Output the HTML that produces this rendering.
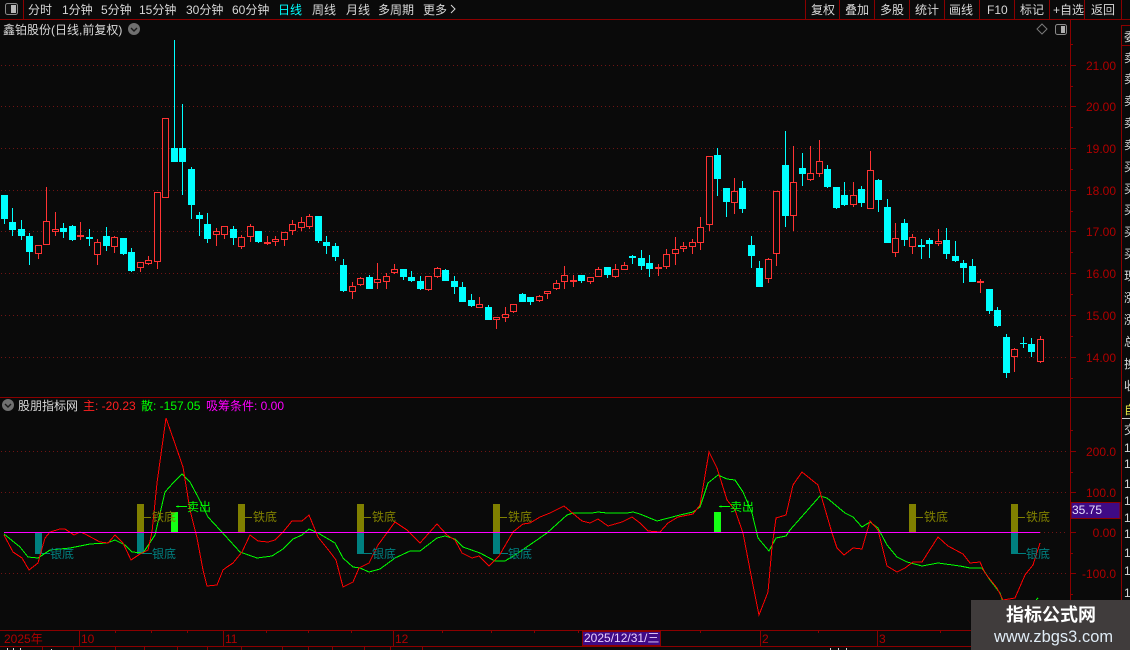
<!DOCTYPE html>
<html><head><meta charset="utf-8"><title>鑫铂股份</title>
<style>
html,body{margin:0;padding:0;background:#0a0a0a;width:1130px;height:650px;overflow:hidden}
svg{display:block;font-family:"Liberation Sans","WenQuanYi Zen Hei","Noto Sans CJK SC",sans-serif;font-size:12px}
text{text-rendering:optimizeSpeed}
.t{fill:#d8d8d8}
.a{fill:#b00000}
.o{fill:#808000}
.s{fill:#008080}
.g{fill:#00ff00}
</style></head><body>
<svg width="1130" height="650" viewBox="0 0 1130 650" xmlns="http://www.w3.org/2000/svg">
<rect width="1130" height="650" fill="#0a0a0a"/>

<!-- grid -->
<g stroke="#701414" stroke-width="1" stroke-dasharray="1 3" fill="none" shape-rendering="crispEdges">
<path d="M1 65.5H1068M1 106.5H1068M1 148.5H1068M1 190.5H1068M1 231.5H1068M1 273.5H1068M1 315.5H1068M1 357.5H1068"/>
<path d="M1 451.5H1068M1 492.5H1068M1040 532.5H1068M1 573.5H1068"/>
</g>

<!-- frame lines -->
<g stroke="#8b0000" stroke-width="1" fill="none" shape-rendering="crispEdges">
<path d="M0 19.5H1130M23.5 0V19M805.5 0V19M839.5 0V19M874.5 0V19M909.5 0V19M944.5 0V19M979.5 0V19M1014.5 0V19M1049.5 0V19M1084.5 0V19M1121.5 0V19"/>
<path d="M1070.5 19V646M1121.5 25V646M1122 25.5H1130M1122 45.5H1130M0 397.5H1121M0 630.5H1121M0 646.5H1121"/>
<path d="M1071 65.5h5M1071 86.5h2M1071 106.5h5M1071 127.5h2M1071 148.5h5M1071 169.5h2M1071 190.5h5M1071 211.5h2M1071 231.5h5M1071 252.5h2M1071 273.5h5M1071 294.5h2M1071 315.5h5M1071 336.5h2M1071 357.5h5M1071 378.5h2M1071 44.5h2"/>
<path d="M1071 451.5h5M1071 472.5h2M1071 492.5h5M1071 532.5h5M1071 553.5h2M1071 573.5h5M1071 430.5h2M1071 594.5h2"/>
<path d="M79.5 631V646M223.5 631V646M393.5 631V646M760.5 631V646M877.5 631V646M115.5 631v2M151.5 631v2M187.5 631v2M266.5 631v2M308.5 631v2M351.5 631v2M442.5 631v2M491.5 631v2M534.5 631v2M578.5 631v2M700.5 631v2M818.5 631v2M940.5 631v2"/>
<path d="M42.5 647V650M73.5 647V650M115.5 647V650M144.5 647V650M177.5 647V650M207.5 647V650M241.5 647V650M282.5 647V650M308.5 647V650M332.5 647V650M364.5 647V650M390.5 647V650M422.5 647V650"/>
</g>

<!-- candles -->
<path shape-rendering="crispEdges" stroke="#00ffff" stroke-width="1" fill="none" d="M4.5 195V224M12.5 208V236M21.5 220V240M29.5 233V265M63.5 223V238M72.5 225V241M89.5 229V246M106.5 227V251M123.5 238V255M131.5 248V272M174.5 40V162M182.5 104V195M191.5 167V219M199.5 212V236M207.5 213V243M233.5 226V245M258.5 231V243M318.5 216V243M326.5 236V254M335.5 243V261M343.5 259V292M369.5 275V289M403.5 269V280M411.5 271V282M420.5 276V290M445.5 269V281M454.5 276V294M462.5 282V302M471.5 294V307M488.5 305V320M522.5 293V302M530.5 297V305M581.5 275V283M607.5 267V278M632.5 255V264M641.5 250V270M649.5 255V277M717.5 148V196M726.5 188V217M742.5 181V213M751.5 236V268M759.5 261V287M785.5 131V227M802.5 153V186M827.5 165V188M836.5 187V209M844.5 182V206M861.5 186V207M878.5 179V212M887.5 199V243M904.5 219V246M921.5 239V259M929.5 238V258M946.5 228V259M955.5 241V262M963.5 260V283M972.5 259V282M989.5 289V314M997.5 307V327M1006.5 334V378M1023.5 337V348M1031.5 338V357"/>
<path shape-rendering="crispEdges" fill="#00ffff" d="M1 195h7v24h-7zM9 222h7v8h-7zM18 229h7v7h-7zM26 236h7v16h-7zM60 228h7v4h-7zM69 226h7v14h-7zM86 237h7v2h-7zM103 236h7v10h-7zM120 238h7v16h-7zM128 252h7v19h-7zM171 148h7v14h-7zM179 148h7v14h-7zM188 169h7v36h-7zM196 215h7v4h-7zM204 224h7v15h-7zM230 229h7v9h-7zM255 231h7v11h-7zM315 216h7v25h-7zM323 242h7v4h-7zM332 246h7v11h-7zM340 265h7v26h-7zM366 277h7v12h-7zM400 269h7v8h-7zM408 277h7v4h-7zM417 281h7v8h-7zM442 270h7v11h-7zM451 281h7v6h-7zM459 287h7v15h-7zM468 300h7v6h-7zM485 307h7v13h-7zM519 294h7v8h-7zM527 297h7v5h-7zM578 275h7v6h-7zM604 267h7v8h-7zM629 256h7v2h-7zM638 258h7v8h-7zM646 263h7v6h-7zM714 155h7v24h-7zM723 188h7v14h-7zM739 188h7v21h-7zM748 245h7v11h-7zM756 268h7v19h-7zM782 165h7v51h-7zM799 168h7v6h-7zM824 169h7v18h-7zM833 187h7v21h-7zM841 195h7v10h-7zM858 189h7v14h-7zM875 180h7v20h-7zM884 207h7v36h-7zM901 223h7v17h-7zM918 245h7v2h-7zM926 240h7v4h-7zM943 240h7v14h-7zM952 256h7v5h-7zM960 263h7v5h-7zM969 266h7v16h-7zM986 289h7v22h-7zM994 310h7v16h-7zM1003 337h7v36h-7zM1020 343h7v1h-7zM1028 344h7v8h-7z"/>
<path shape-rendering="crispEdges" stroke="#ff3333" stroke-width="1" fill="none" d="M38.5 245V259M46.5 187V245M55.5 212V236M80.5 222V240M97.5 239V265M114.5 236V253M140.5 262V272M148.5 256V265M157.5 192V269M216.5 228V246M224.5 226V239M241.5 235V249M250.5 224V242M267.5 236V245M275.5 236V246M284.5 232V246M292.5 220V235M301.5 217V231M309.5 214V229M352.5 282V299M360.5 277V286M377.5 263V289M386.5 273V289M394.5 264V274M428.5 276V291M437.5 267V278M479.5 297V308M496.5 317V329M505.5 307V322M513.5 304V313M539.5 295V302M547.5 291V299M556.5 280V290M564.5 266V289M573.5 275V287M590.5 277V284M598.5 267V277M615.5 264V278M624.5 262V270M658.5 264V276M666.5 249V269M675.5 237V265M683.5 242V252M692.5 239V254M700.5 217V250M709.5 156V231M734.5 178V214M768.5 258V283M776.5 191V266M793.5 146V231M810.5 146V181M819.5 140V177M853.5 182V207M870.5 151V209M895.5 223V257M912.5 234V254M938.5 229V246M980.5 279V293M1014.5 348V372M1040.5 336V363"/>
<path shape-rendering="crispEdges" stroke="#ff3333" stroke-width="1" fill="#0a0a0a" d="M35.5 245.5h6v8h-6zM43.5 221.5h6v23h-6zM52.5 229.5h6v2h-6zM94.5 242.5h6v12h-6zM111.5 237.5h6v9h-6zM137.5 262.5h6v5h-6zM145.5 260.5h6v3h-6zM154.5 192.5h6v69h-6zM162.5 118.5h6v79h-6zM213.5 231.5h6v3h-6zM221.5 226.5h6v8h-6zM238.5 237.5h6v9h-6zM247.5 226.5h6v10h-6zM272.5 239.5h6v2h-6zM281.5 232.5h6v7h-6zM289.5 224.5h6v6h-6zM298.5 222.5h6v5h-6zM306.5 216.5h6v10h-6zM349.5 286.5h6v5h-6zM357.5 278.5h6v6h-6zM374.5 279.5h6v3h-6zM383.5 276.5h6v5h-6zM391.5 269.5h6v3h-6zM425.5 276.5h6v13h-6zM434.5 268.5h6v8h-6zM476.5 304.5h6v3h-6zM493.5 317.5h6v2h-6zM502.5 314.5h6v3h-6zM510.5 304.5h6v7h-6zM536.5 296.5h6v4h-6zM544.5 291.5h6v2h-6zM553.5 283.5h6v5h-6zM561.5 275.5h6v6h-6zM587.5 277.5h6v4h-6zM595.5 269.5h6v7h-6zM612.5 269.5h6v7h-6zM621.5 265.5h6v4h-6zM663.5 254.5h6v12h-6zM672.5 249.5h6v4h-6zM680.5 246.5h6v2h-6zM689.5 242.5h6v4h-6zM697.5 227.5h6v15h-6zM706.5 156.5h6v68h-6zM731.5 191.5h6v11h-6zM765.5 259.5h6v19h-6zM773.5 191.5h6v62h-6zM790.5 182.5h6v33h-6zM807.5 173.5h6v6h-6zM816.5 161.5h6v12h-6zM850.5 195.5h6v9h-6zM867.5 170.5h6v38h-6zM892.5 238.5h6v14h-6zM909.5 237.5h6v9h-6zM935.5 241.5h6v2h-6zM1011.5 349.5h6v7h-6zM1037.5 339.5h6v22h-6z"/>
<path shape-rendering="crispEdges" fill="#ff3333" d="M77 235h7v2h-7zM264 242h7v2h-7zM570 280h7v2h-7zM655 267h7v2h-7zM977 281h7v2h-7z"/>

<!-- indicator bars -->
<g shape-rendering="crispEdges">
<rect x="137" y="504" width="7" height="28" fill="#808000"/>
<rect x="238" y="504" width="7" height="28" fill="#808000"/>
<rect x="357" y="504" width="7" height="28" fill="#808000"/>
<rect x="493" y="504" width="7" height="28" fill="#808000"/>
<rect x="909" y="504" width="7" height="28" fill="#808000"/>
<rect x="1011" y="504" width="7" height="28" fill="#808000"/>
<rect x="35" y="533" width="7" height="21" fill="#008080"/>
<rect x="137" y="533" width="7" height="21" fill="#008080"/>
<rect x="357" y="533" width="7" height="21" fill="#008080"/>
<rect x="493" y="533" width="7" height="21" fill="#008080"/>
<rect x="1011" y="533" width="7" height="21" fill="#008080"/>
<rect x="171" y="512" width="7" height="20" fill="#14ff14"/>
<rect x="714" y="512" width="7" height="20" fill="#14ff14"/>
<path stroke="#808000" fill="none" d="M144 517.5h7M245 517.5h7M364 517.5h7M500 517.5h7M916 517.5h7M1018 517.5h7"/>
<path stroke="#008080" fill="none" d="M42 553.5h8M144 553.5h8M364 553.5h8M500 553.5h8M1018 553.5h8"/>
</g>

<!-- indicator lines -->
<polyline shape-rendering="crispEdges" fill="none" stroke="#00ff00" stroke-width="1" points="4,534 20,547 28,557 38,558 50,550 70,548 90,544 107,543 115,540 125,545 132,552 143,553 155,535 165,492 173,483 182,474 190,482 198,497 208,517 220,530 240,552 257,558 272,556 283,549 293,539 302,535 309,529 318,533 335,543 343,558 353,567 360,568 369,572 380,569 395,558 410,551 420,551 437,538 445,536 455,539 463,547 480,553 495,561 505,561 518,553 547,533 567,515 573,513 592,513 598,512 607,513 627,513 633,512 640,514 657,521 680,515 693,512 700,507 708,483 718,475 727,479 735,480 743,492 752,513 758,538 769,551 776,538 786,536 790,530 820,496 827,498 845,513 853,517 862,527 870,522 878,528 887,545 897,557 907,562 922,566 938,563 960,566 970,568 982,568 990,580 1000,593 1003,602"/>
<polyline shape-rendering="crispEdges" fill="none" stroke="#00ff00" stroke-width="1" points="1036,600 1038,598"/>
<polyline shape-rendering="crispEdges" fill="none" stroke="#ff0000" stroke-width="1" points="4,535 13,552 22,558 29,570 38,563 41,552 45,538 50,532 60,529 65,529 74,535 80,532 85,534 100,542 108,543 115,535 123,543 131,560 140,554 148,550 152,532 157,483 166,418 173,438 183,467 190,510 197,538 203,570 207,586 217,585 223,570 227,567 233,563 242,552 250,535 258,541 268,542 275,540 283,532 292,521 302,521 309,515 318,537 330,552 336,560 343,587 353,582 359,568 369,563 378,545 395,522 407,530 420,543 437,524 447,535 455,540 462,553 472,558 479,556 489,566 499,556 513,532 523,524 530,523 540,517 550,513 564,506 582,521 590,523 598,519 608,526 622,522 632,517 640,523 648,531 660,532 668,523 678,517 693,514 700,505 709,452 717,468 727,500 735,510 743,533 752,580 759,615 768,592 772,547 776,518 786,515 793,485 802,472 818,485 832,533 837,548 844,555 853,548 862,549 870,521 878,530 887,566 897,572 905,568 913,562 922,562 938,537 948,546 963,554 970,563 980,562 985,573 997,588 1003,600 1015,598 1025,575 1033,565 1040,543"/>
<path shape-rendering="crispEdges" stroke="#ff00ff" stroke-width="1" d="M4 532.5H1040"/>

<!-- indicator labels -->
<g>
<text x="152" y="521" class="o">铁底</text><text x="253" y="521" class="o">铁底</text><text x="372" y="521" class="o">铁底</text><text x="508" y="521" class="o">铁底</text><text x="924" y="521" class="o">铁底</text><text x="1026" y="521" class="o">铁底</text>
<text x="50" y="558" class="s">银底</text><text x="152" y="558" class="s">银底</text><text x="372" y="558" class="s">银底</text><text x="508" y="558" class="s">银底</text><text x="1026" y="558" class="s">银底</text>
<text x="187" y="511" class="g">卖出</text>
<text x="730" y="511" class="g">卖出</text>
</g>
<path stroke="#00ff00" fill="none" shape-rendering="crispEdges" d="M176 506.5h11M178 505.5v2M177 506v1M719 506.5h11M721 505.5v2M720 506v1"/>

<!-- top toolbar -->
<rect x="5.5" y="3.5" width="12" height="11" rx="2" fill="#111" stroke="#8a8a8a"/>
<rect x="11" y="5" width="5" height="8" fill="#b8b8b8"/>
<g class="t">
<text x="28" y="14">分时</text><text x="62" y="14">1分钟</text><text x="101" y="14">5分钟</text><text x="139" y="14">15分钟</text><text x="186" y="14">30分钟</text><text x="232" y="14">60分钟</text>
<text x="278" y="14" fill="#00ffff" style="fill:#00ffff">日线</text>
<text x="312" y="14">周线</text><text x="346" y="14">月线</text><text x="378" y="14">多周期</text><text x="423" y="14">更多</text>
<text x="811" y="14">复权</text><text x="845" y="14">叠加</text><text x="880" y="14">多股</text><text x="915" y="14">统计</text><text x="949" y="14">画线</text><text x="987" y="14">F10</text><text x="1020" y="14">标记</text><text x="1053" y="14">+自选</text><text x="1091" y="14">返回</text>
</g>
<path d="M451 5l4 4-4 4" fill="none" stroke="#d8d8d8"/>

<!-- title -->
<text x="3" y="34" class="t">鑫铂股份(日线,前复权)</text>
<circle cx="134" cy="29" r="6" fill="#707070"/><path d="M131 28l3 3 3-3" fill="none" stroke="#1a1a1a" stroke-width="1.4"/>
<path d="M1042 24l5 5-5 5-5-5z" fill="none" stroke="#7a7a7a"/>
<rect x="1055.5" y="24.5" width="11" height="10" rx="2" fill="#111" stroke="#8a8a8a"/><rect x="1061" y="26" width="4" height="7" fill="#b0b0b0"/>

<circle cx="8" cy="405" r="6" fill="#707070"/><path d="M5 404l3 3 3-3" fill="none" stroke="#1a1a1a" stroke-width="1.4"/>
<text x="18" y="410" class="t">股朋指标网</text>
<text x="83" y="410" fill="#ff2020">主: -20.23</text>
<text x="141" y="410" fill="#00ff00">散: -157.05</text>
<text x="206" y="410" fill="#ff00ff">吸筹条件: 0.00</text>

<!-- price axis -->
<g class="a" text-anchor="end">
<text x="1116" y="70">21.00</text><text x="1116" y="111">20.00</text><text x="1116" y="153">19.00</text><text x="1116" y="195">18.00</text><text x="1116" y="236">17.00</text><text x="1116" y="278">16.00</text><text x="1116" y="320">15.00</text><text x="1116" y="362">14.00</text>
<text x="1116" y="456">200.0</text><text x="1116" y="497">100.0</text><text x="1116" y="537">0.00</text><text x="1116" y="578">-100.0</text>
</g>
<rect x="1071" y="502.5" width="49" height="16" fill="#3f0a85" stroke="#8b0000"/>
<text x="1072" y="514" fill="#e8e0ff">35.75</text>

<!-- right column -->
<g class="t">
<text x="1124" y="41">委</text><text x="1124" y="62">卖</text><text x="1124" y="83">卖</text><text x="1124" y="105">卖</text><text x="1124" y="127">卖</text><text x="1124" y="149">卖</text><text x="1124" y="171">买</text><text x="1124" y="193">买</text><text x="1124" y="214">买</text><text x="1124" y="236">买</text><text x="1124" y="258">买</text><text x="1124" y="280">现</text><text x="1124" y="302">涨</text><text x="1124" y="324">涨</text><text x="1124" y="346">总</text><text x="1124" y="368">换</text><text x="1124" y="390">收</text>
<text x="1124" y="434">交</text>
<text x="1124" y="452">1</text><text x="1124" y="468">1</text><text x="1124" y="488">1</text><text x="1124" y="505">1</text><text x="1124" y="522">1</text><text x="1124" y="538">1</text><text x="1124" y="557">1</text><text x="1124" y="575">1</text><text x="1124" y="597">1</text>
</g>
<text x="1124" y="414" fill="#e0e040">自</text>
<path d="M1122 418.5h8" stroke="#c8c8c8" shape-rendering="crispEdges"/>

<!-- date axis -->
<g class="a">
<text x="4" y="643">2025年</text><text x="81" y="643">10</text><text x="225" y="643">11</text><text x="395" y="643">12</text><text x="762" y="643">2</text><text x="879" y="643">3</text>
</g>
<rect x="582.5" y="631.5" width="78" height="14" fill="#3f0a85" stroke="#8b0000"/>
<text x="584" y="642" fill="#e8d0ff">2025/12/31/三</text>
<path shape-rendering="crispEdges" stroke="#d8d8d8" fill="none" d="M7.5 648v2M13.5 648v2M20.5 648v2M51.5 649v1M830.5 648v2M838.5 648v2M846.5 648v2"/>

<!-- watermark -->
<rect x="971" y="600" width="159" height="50" fill="#403c3c"/>
<text x="1006" y="621" font-size="18" font-weight="bold" fill="#ffffff" style="font-size:18px;font-weight:bold;font-family:'Liberation Sans','Noto Sans CJK SC',sans-serif">指标公式网</text>
<text x="994" y="642" fill="#e0ecf6" style="font-size:16.4px;letter-spacing:.05px">www.zbgs3.com</text>
</svg>
</body></html>
